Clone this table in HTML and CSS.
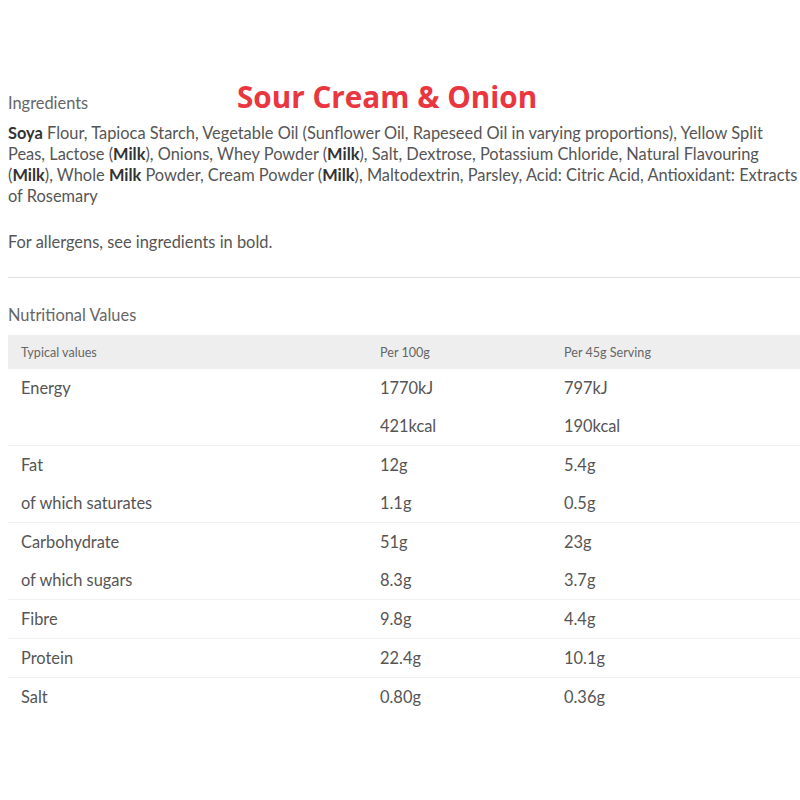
FILE: index.html
```html
<!DOCTYPE html>
<html lang="en">
<head>
<meta charset="utf-8">
<title>Sour Cream &amp; Onion</title>
<link rel="stylesheet" href="styles.css">
</head>
<body>
<div class="page">
  <h1 class="title">Sour Cream &amp; Onion</h1>
  <section class="ingredients">
    <h2 class="label">Ingredients</h2>
    <p class="text"><b>Soya</b> Flour, Tapioca Starch, Vegetable Oil (Sunflower Oil, Rapeseed Oil in varying proportions), Yellow Split<br>Peas, Lactose (<b>Milk</b>), Onions, Whey Powder (<b>Milk</b>), Salt, Dextrose, Potassium Chloride, Natural Flavouring<br>(<b>Milk</b>), Whole <b>Milk</b> Powder, Cream Powder (<b>Milk</b>), Maltodextrin, Parsley, Acid: Citric Acid, Antioxidant: Extracts<br>of Rosemary</p>
    <p class="text allergens">For allergens, see ingredients in bold.</p>
  </section>
  <hr class="divider">
  <section class="nutrition">
    <h2 class="label">Nutritional Values</h2>
    <table class="table">
      <thead>
        <tr><th class="c1">Typical values</th><th class="c2">Per 100g</th><th class="c3">Per 45g Serving</th></tr>
      </thead>
      <tbody>
        <tr><td><div>Energy</div><div>&nbsp;</div></td><td><div>1770kJ</div><div>421kcal</div></td><td><div>797kJ</div><div>190kcal</div></td></tr>
        <tr><td><div>Fat</div><div>of which saturates</div></td><td><div>12g</div><div>1.1g</div></td><td><div>5.4g</div><div>0.5g</div></td></tr>
        <tr><td><div>Carbohydrate</div><div>of which sugars</div></td><td><div>51g</div><div>8.3g</div></td><td><div>23g</div><div>3.7g</div></td></tr>
        <tr><td><div>Fibre</div></td><td><div>9.8g</div></td><td><div>4.4g</div></td></tr>
        <tr><td><div>Protein</div></td><td><div>22.4g</div></td><td><div>10.1g</div></td></tr>
        <tr class="last"><td><div>Salt</div></td><td><div>0.80g</div></td><td><div>0.36g</div></td></tr>
      </tbody>
    </table>
  </section>
</div>
</body>
</html>
```

FILE: styles.css
```css
html, body {
  margin: 0;
  padding: 0;
  background: #ffffff;
}
body {
  font-family: "Lato", "Source Sans Pro", "Noto Sans", sans-serif;
  color: #555555;
}
.page {
  position: relative;
  padding: 92px 0 0 8px;
}
.title {
  position: absolute;
  left: 237px;
  top: 77px;
  margin: 0;
  font-family: "Open Sans", "Noto Sans", sans-serif;
  font-weight: 700;
  font-size: 29.7px;
  line-height: 40px;
  color: #e9363f;
}
.label {
  margin: 0;
  font-size: 16.4px;
  font-weight: 400;
  line-height: 22px;
  color: #666666;
}
.text {
  margin: 8px 0 0 0;
  font-size: 16.4px;
  line-height: 21px;
  color: #555555;
  white-space: nowrap;
}
.text b {
  color: #333333;
  font-weight: 700;
}
.allergens {
  margin-top: 25px;
}
.divider {
  margin: 25px 0 0 0;
  border: 0;
  border-top: 1px solid #dddddd;
  height: 0;
}
.nutrition {
  padding-top: 26px;
}
.table {
  margin-top: 9px;
  width: 792px;
  border-collapse: collapse;
  font-size: 16.4px;
}
.table th {
  background: #eeeeee;
  font-weight: 400;
  font-size: 12.6px;
  color: #666666;
  text-align: left;
  height: 34px;
  padding: 0 13px;
  vertical-align: middle;
}
.c1 { width: 333px; }
.c2 { width: 158px; }
.table td {
  padding: 0 13px;
  vertical-align: top;
  border-bottom: 1px solid #f0f0f0;
}
.table tr.last td {
  border-bottom: 0;
}
.table td div {
  padding: 9px 0;
  line-height: 20px;
}
```
